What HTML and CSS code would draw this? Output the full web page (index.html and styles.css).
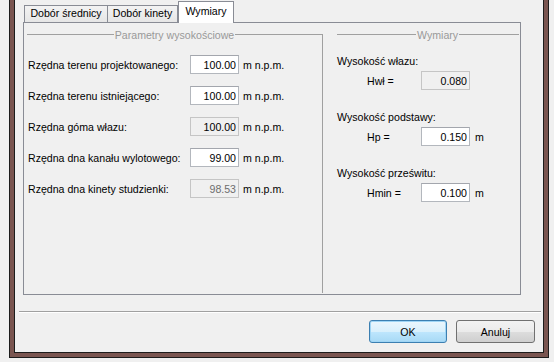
FILE: index.html
```html
<!DOCTYPE html>
<html lang="pl">
<head>
  <meta charset="UTF-8" />
  <title>Wymiary</title>
  <link rel="stylesheet" href="styles.css">
</head>
<body>
  <div class="window">
    <div class="client">
      <div class="tabs">
        <div class="tab tab-first">Dobór średnicy</div>
        <div class="tab tab-second">Dobór kinety</div>
        <div class="tab tab-active">Wymiary</div>
      </div>
      <div class="panel">
        <div class="col col-left">
          <div class="legend">
            <span class="legend-line"></span>
            <span class="legend-text">Parametry wysokościowe</span>
            <span class="legend-line"></span>
          </div>
          <div class="rows">
            <div class="row">
              <span class="label">Rzędna terenu projektowanego:</span>
              <input class="field" type="text" value="100.00" />
              <span class="unit">m n.p.m.</span>
            </div>
            <div class="row">
              <span class="label">Rzędna terenu istniejącego:</span>
              <input class="field" type="text" value="100.00" />
              <span class="unit">m n.p.m.</span>
            </div>
            <div class="row">
              <span class="label">Rzędna góma włazu:</span>
              <input class="field readonly" type="text" value="100.00" readonly />
              <span class="unit">m n.p.m.</span>
            </div>
            <div class="row">
              <span class="label">Rzędna dna kanału wylotowego:</span>
              <input class="field" type="text" value="99.00" />
              <span class="unit">m n.p.m.</span>
            </div>
            <div class="row">
              <span class="label">Rzędna dna kinety studzienki:</span>
              <input class="field disabled" type="text" value="98.53" disabled />
              <span class="unit">m n.p.m.</span>
            </div>
          </div>
        </div>
        <div class="col col-right">
          <div class="legend legend-right">
            <span class="legend-line legend-fixed"></span>
            <span class="legend-text">Wymiary</span>
            <span class="legend-line"></span>
          </div>
          <div class="dim dim-first">
            <div class="dim-title">Wysokość włazu:</div>
            <div class="dim-row">
              <span class="dim-label">Hwł =</span>
              <input class="field readonly" type="text" value="0.080" readonly />
            </div>
          </div>
          <div class="dim">
            <div class="dim-title">Wysokość podstawy:</div>
            <div class="dim-row">
              <span class="dim-label">Hp =</span>
              <input class="field" type="text" value="0.150" />
              <span class="dim-unit">m</span>
            </div>
          </div>
          <div class="dim">
            <div class="dim-title">Wysokość prześwitu:</div>
            <div class="dim-row">
              <span class="dim-label">Hmin =</span>
              <input class="field" type="text" value="0.100" />
              <span class="dim-unit">m</span>
            </div>
          </div>
        </div>
      </div>
      <div class="separator"></div>
      <div class="buttons">
        <button class="btn btn-default">OK</button>
        <button class="btn">Anuluj</button>
      </div>
    </div>
  </div>
</body>
</html>
```

FILE: styles.css
```css
html, body {
  margin: 0;
  padding: 0;
}
body {
  width: 554px;
  height: 362px;
  overflow: hidden;
  background: #f0f0f0;
  font-family: "Liberation Sans", Arial, sans-serif;
  font-size: 10.6px;
  color: #000;
}
.window {
  margin-left: 9px;
  width: 540px;
  height: 358px;
  box-sizing: border-box;
  background: #7a5550;
  border: 1px solid #1c1c1c;
  border-top: 0;
  padding: 0 4px 4px;
}
.client {
  height: 100%;
  box-sizing: border-box;
  background: #f0f0f0;
  border: 1px solid #1c1c1c;
  border-top: 0;
}

/* tabs */
.tabs {
  display: flex;
  align-items: flex-end;
  height: 21px;
  padding-top: 1px;
  margin-left: 9px;
}
.tab {
  box-sizing: border-box;
  height: 17px;
  line-height: 15px;
  text-align: center;
  border: 1px solid #898c95;
  border-bottom: 0;
  background: linear-gradient(#f3f3f3, #e6e6e6);
  white-space: nowrap;
}
.tab-first {
  width: 84px;
}
.tab-second {
  width: 71px;
  margin-left: -1px;
}
.tab-active {
  width: 56px;
  height: 22px;
  line-height: 19px;
  margin-bottom: -1px;
  background: #fff;
  position: relative;
  z-index: 1;
}

/* panel */
.panel {
  display: flex;
  margin-left: 8px;
  width: 498px;
  height: 273px;
  box-sizing: border-box;
  border: 1px solid #898c95;
}
.col {
  margin-top: 11px;
  height: 259px;
  box-sizing: border-box;
}
.col-left {
  width: 299px;
  padding-left: 3px;
  border-right: 1px solid #a0a0a0;
}
.col-right {
  flex: 1;
  padding-left: 14px;
  padding-right: 1px;
}
.legend {
  display: flex;
  align-items: center;
  height: 13px;
  margin-top: -6px;
}
.legend-line {
  flex: 1;
  height: 1px;
  background: #a0a0a0;
}
.legend-fixed {
  flex: none;
  width: 79px;
}
.legend-text {
  padding: 0 1px;
  color: #999;
  white-space: nowrap;
}

/* left rows */
.rows {
  display: flex;
  flex-direction: column;
  gap: 12px;
  margin-top: 14px;
}
.row {
  display: flex;
  align-items: center;
  height: 19px;
}
.label {
  width: 163px;
  padding-left: 1px;
  box-sizing: border-box;
  white-space: nowrap;
}
.unit {
  margin-left: 4px;
}
.field {
  width: 49px;
  height: 19px;
  box-sizing: border-box;
  margin: 0;
  padding: 0 2px 0 0;
  border: 1px solid #b3b7bd;
  border-top-color: #a3a6ad;
  background: #fff;
  font-family: inherit;
  font-size: 10.6px;
  color: #000;
  text-align: right;
  outline: none;
}
.field.readonly {
  background: #f0f0f0;
  border-color: #c5c5c5;
}
.field.disabled {
  background: #f0f0f0;
  border-color: #c5c5c5;
  color: #6d6d6d;
  -webkit-text-fill-color: #6d6d6d;
}

/* right column */
.dim {
  margin-top: 20px;
}
.dim-first {
  margin-top: 13px;
}
.dim-title {
  line-height: 14px;
}
.dim-row {
  display: flex;
  align-items: center;
  height: 19px;
  margin-top: 3px;
}
.dim-label {
  width: 54px;
  margin-left: 30px;
}
.dim-unit {
  margin-left: 5px;
}

/* bottom */
.separator {
  margin: 16px 0 0 4px;
  width: 522px;
  height: 1px;
  background: #a0a0a0;
  border-bottom: 1px solid #fff;
}
.buttons {
  display: flex;
  justify-content: flex-end;
  gap: 9px;
  margin-top: 7px;
  padding-right: 8px;
}
.btn {
  width: 78px;
  height: 23px;
  box-sizing: border-box;
  border: 1px solid #707070;
  border-radius: 3px;
  background: linear-gradient(#f2f2f2 0%, #ebebeb 50%, #dddddd 51%, #cfcfcf 100%);
  font-family: inherit;
  font-size: 10.6px;
  color: #000;
  padding: 0;
}
.btn + .btn {
  width: 79px;
}
.btn-default {
  border-color: #3c7fb1;
  background: linear-gradient(#eaf6fd 0%, #d9f0fc 50%, #bee6fd 51%, #a7d9f5 100%);
  box-shadow: inset 0 0 0 1px #9fd5f5;
}
```
